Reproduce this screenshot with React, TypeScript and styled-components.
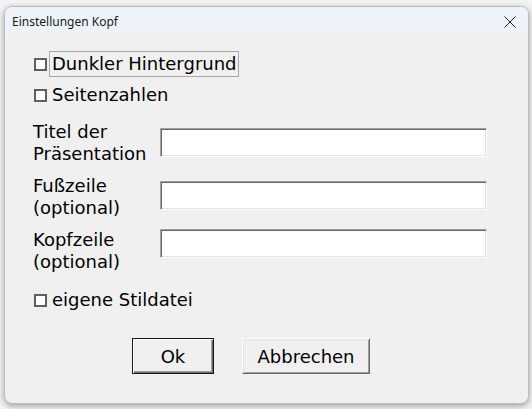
import styled, { createGlobalStyle } from 'styled-components';

const GlobalStyle = createGlobalStyle`
  html, body {
    margin: 0;
    padding: 0;
    background: #f3f3f3;
  }
`;

const fields = [
  { label: ['Titel der', 'Präsentation'], offset: 7 },
  { label: ['Fußzeile', '(optional)'], offset: 6 },
  { label: ['Kopfzeile', '(optional)'], offset: 0 },
];

function CloseIcon() {
  return (
    <svg width="12" height="12" viewBox="0 0 12 12">
      <path d="M0.5 0.5 L11.5 11.5 M11.5 0.5 L0.5 11.5" stroke="#1f1f1f" strokeWidth="1" fill="none" />
    </svg>
  );
}

function App() {
  return (
    <Screen>
      <GlobalStyle />
      <Window>
        <TitleBar>
          <Title>Einstellungen Kopf</Title>
          <CloseButton>
            <CloseIcon />
          </CloseButton>
        </TitleBar>

        <Body>
          <CheckRow $top={0}>
            <Box />
            <CheckLabel $focused>Dunkler Hintergrund</CheckLabel>
          </CheckRow>
          <CheckRow $top={5}>
            <Box />
            <CheckLabel>Seitenzahlen</CheckLabel>
          </CheckRow>

          <Form>
            {fields.map((f) => (
              <FieldRow key={f.label[0]}>
                <FieldLabel>
                  {f.label[0]}
                  <br />
                  {f.label[1]}
                </FieldLabel>
                <Entry $offset={f.offset} />
              </FieldRow>
            ))}
          </Form>

          <CheckRow $top={14}>
            <Box />
            <CheckLabel>eigene Stildatei</CheckLabel>
          </CheckRow>

          <ButtonRow>
            <DialogButton $default $width={82}>Ok</DialogButton>
            <DialogButton $width={128}>Abbrechen</DialogButton>
          </ButtonRow>
        </Body>
      </Window>
    </Screen>
  );
}

export default App;

const Screen = styled.div`
  width: 532px;
  height: 409px;
  box-sizing: border-box;
  padding: 6px 3px 5px 4px;
  overflow: hidden;
`;

const Window = styled.div`
  width: 525px;
  height: 398px;
  box-sizing: border-box;
  border: 1px solid #bdbdbd;
  border-radius: 8px;
  background: #f0f0f0;
  box-shadow: 0 2px 6px rgba(0, 0, 0, 0.35);
  overflow: hidden;
  display: flex;
  flex-direction: column;
`;

const TitleBar = styled.div`
  height: 29px;
  flex-shrink: 0;
  background: #eef3f9;
  display: flex;
  align-items: center;
  justify-content: space-between;
  padding: 0 12px 0 7px;
`;

const Title = styled.span`
  font-family: 'Noto Sans', sans-serif;
  font-size: 12px;
  color: #1a1a1a;
`;

const CloseButton = styled.span`
  display: flex;
  align-items: center;
  margin-top: 1px;
`;

const Body = styled.div`
  display: flex;
  flex-direction: column;
  padding: 15px 0 0 28px;
  font-family: 'DejaVu Sans', Verdana, sans-serif;
  font-size: 18px;
  color: #000;
`;

const CheckRow = styled.div<{ $top: number }>`
  display: flex;
  align-items: center;
  height: 26px;
  margin-top: ${(p) => p.$top}px;
`;

const Box = styled.span`
  width: 13px;
  height: 13px;
  box-sizing: border-box;
  border: 2px solid #5f5f5f;
  background: #fff;
  margin-left: 1px;
  margin-right: 2px;
`;

const CheckLabel = styled.span<{ $focused?: boolean }>`
  height: 26px;
  box-sizing: border-box;
  display: flex;
  align-items: center;
  padding: 0 1px 0 2px;
  border: 1px solid ${(p) => (p.$focused ? '#a8a8a8' : 'transparent')};
  line-height: 1;
`;

const Form = styled.div`
  display: grid;
  grid-template-columns: 127px 327px;
  row-gap: 10px;
  margin-top: 13px;
`;

const FieldRow = styled.div`
  display: contents;
`;

const FieldLabel = styled.div`
  line-height: 22px;
`;

const Entry = styled.div<{ $offset: number }>`
  height: 29px;
  margin-top: ${(p) => p.$offset}px;
  box-sizing: border-box;
  background: #fff;
  border: 1px solid;
  border-color: #a0a0a0 #ffffff #ffffff #a0a0a0;
  box-shadow: inset 1px 1px 0 #696969, inset -1px -1px 0 #e3e3e3;
`;

const ButtonRow = styled.div`
  display: flex;
  gap: 28px;
  margin-top: 25px;
  padding-left: 99px;
`;

const DialogButton = styled.div<{ $width: number; $default?: boolean }>`
  width: ${(p) => p.$width}px;
  height: 36px;
  box-sizing: border-box;
  display: flex;
  align-items: center;
  justify-content: center;
  background: #f0f0f0;
  border: 1px solid;
  border-color: ${(p) => (p.$default ? '#1a1a1a' : '#ffffff #696969 #696969 #ffffff')};
  box-shadow: ${(p) =>
    p.$default
      ? 'inset 1px 1px 0 #ffffff, inset -1px -1px 0 #696969, inset -2px -2px 0 #a0a0a0'
      : 'inset 1px 1px 0 #e3e3e3, inset -1px -1px 0 #a0a0a0'};
`;
